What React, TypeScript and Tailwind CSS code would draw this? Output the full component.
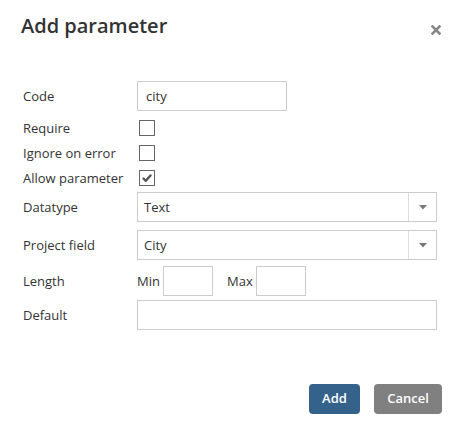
import React from "react";

const font = { fontFamily: '"Open Sans", "Noto Sans", sans-serif' };

function Checkbox({ checked }: { checked?: boolean }) {
  return (
    <div className="w-[16px] h-[16px] border border-[#666] bg-white flex items-center justify-center">
      {checked && (
        <svg width="12" height="12" viewBox="0 0 12 12">
          <path d="M2.5 6.5 L4.8 8.8 L9.5 3.5" fill="none" stroke="#555" strokeWidth="2.4" strokeLinecap="round" strokeLinejoin="round" />
        </svg>
      )}
    </div>
  );
}

function Select({ value }: { value: string }) {
  return (
    <div className="w-[300px] h-[30px] border border-[#ccc] flex items-stretch bg-white">
      <div className="flex-1 flex items-center pl-[6px] pt-[1px] text-[13px] text-[#333]">{value}</div>
      <div className="w-[28px] border-l border-[#ddd] flex items-center justify-center">
        <svg width="8" height="5" viewBox="0 0 8 5">
          <path d="M0 0 H8 L4 4.5 Z" fill="#777" />
        </svg>
      </div>
    </div>
  );
}

function Row({ label, children, className }: { label: string; children: React.ReactNode; className: string }) {
  return (
    <div className={"flex items-center " + className}>
      <div className="w-[114px] pt-[2px] text-[13px] text-[#333]">{label}</div>
      {children}
    </div>
  );
}

export default function App() {
  return (
    <div style={font} className="w-[457px] h-[433px] bg-white relative">
      <div className="flex items-start justify-between pl-[21px] pr-[16px] pt-[11px]">
        <div className="text-[20px] font-semibold text-[#333] leading-[30px]">Add parameter</div>
        <div className="mt-[14px] text-[#888]">
          <svg width="10" height="10" viewBox="0 0 10 10">
            <path d="M1.5 1.5 L8.5 8.5 M8.5 1.5 L1.5 8.5" stroke="#888" strokeWidth="2.6" strokeLinecap="square" />
          </svg>
        </div>
      </div>
      <div className="pl-[23px] mt-[40px]">
        <Row label="Code" className="h-[30px]">
          <div className="w-[150px] h-[30px] border border-[#ccc] flex items-center pl-[8px] pt-[1px] text-[13px] text-[#333]">city</div>
        </Row>
        <Row label="Require" className="h-[16px] mt-[9px]">
          <div className="ml-[2px]"><Checkbox /></div>
        </Row>
        <Row label="Ignore on error" className="h-[16px] mt-[9px]">
          <div className="ml-[2px]"><Checkbox /></div>
        </Row>
        <Row label="Allow parameter" className="h-[16px] mt-[9px]">
          <div className="ml-[2px]"><Checkbox checked /></div>
        </Row>
        <Row label="Datatype" className="h-[30px] mt-[6px]">
          <Select value="Text" />
        </Row>
        <Row label="Project field" className="h-[30px] mt-[8px]">
          <Select value="City" />
        </Row>
        <Row label="Length" className="h-[30px] mt-[6px]">
          <div className="flex items-center text-[13px] text-[#333]">
            <span className="w-[26px] pt-[2px]">Min</span>
            <div className="w-[50px] h-[30px] border border-[#ccc]" />
            <span className="ml-[14px] w-[29px] pt-[2px]">Max</span>
            <div className="w-[50px] h-[30px] border border-[#ccc]" />
          </div>
        </Row>
        <Row label="Default" className="h-[30px] mt-[4px]">
          <div className="w-[300px] h-[30px] border border-[#ccc]" />
        </Row>
      </div>
      <div className="flex justify-end gap-[14px] pr-[15px] mt-[54px]">
        <button className="w-[51px] h-[30px] rounded-[4px] bg-[#35628a] text-white text-[13px] font-semibold">Add</button>
        <button className="w-[68px] h-[30px] rounded-[4px] bg-[#808080] text-white text-[13px] font-semibold">Cancel</button>
      </div>
    </div>
  );
}
